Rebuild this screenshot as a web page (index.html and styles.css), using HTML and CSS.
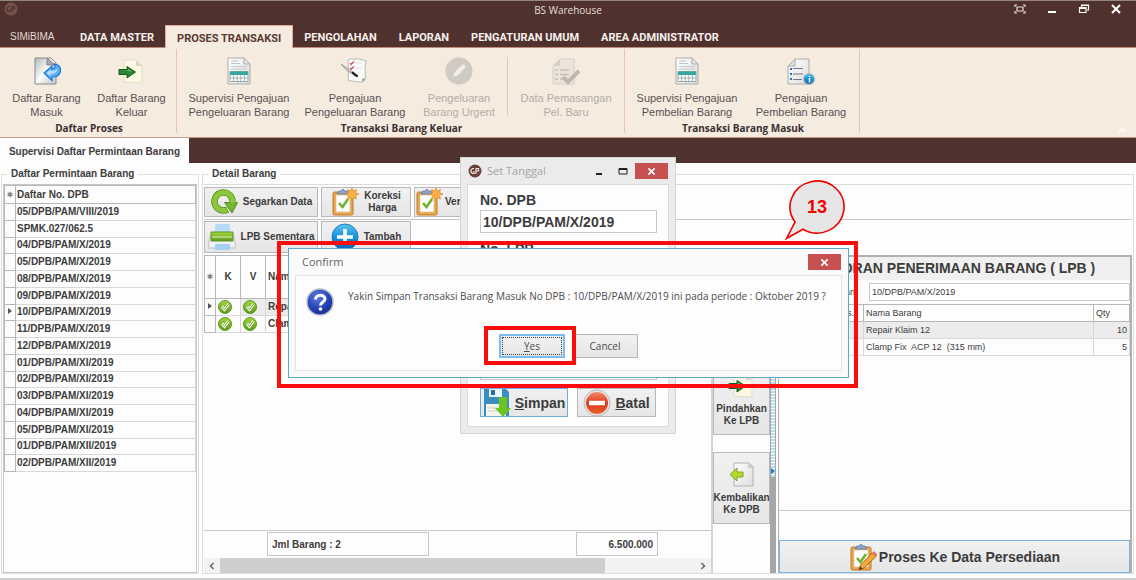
FILE: index.html
```html
<!DOCTYPE html>
<html lang="id">
<head>
<meta charset="utf-8">
<title>BS Warehouse</title>
<link rel="stylesheet" href="styles.css">
</head>
<body>
<svg class="defs" aria-hidden="true">
  <defs>
    <linearGradient id="gPaper" x1="0" y1="0" x2="1" y2="1"><stop offset="0" stop-color="#fff"/><stop offset="1" stop-color="#dcdedd"/></linearGradient>
    <linearGradient id="gSteel" x1="0" y1="0" x2="1" y2="1"><stop offset="0" stop-color="#b4b8bc"/><stop offset=".5" stop-color="#fafafa"/><stop offset="1" stop-color="#c4c8cc"/></linearGradient>
    <linearGradient id="gGreen" x1="0" y1="0" x2="0" y2="1"><stop offset="0" stop-color="#a6d43c"/><stop offset="1" stop-color="#5a9a1c"/></linearGradient>
    <linearGradient id="gBlue" x1="0" y1="0" x2="0" y2="1"><stop offset="0" stop-color="#5ec2f0"/><stop offset=".5" stop-color="#1593dc"/><stop offset="1" stop-color="#0a5fae"/></linearGradient>
    <linearGradient id="gRed" x1="0" y1="0" x2="0" y2="1"><stop offset="0" stop-color="#f58a6c"/><stop offset=".5" stop-color="#dd3a1c"/><stop offset="1" stop-color="#e8602e"/></linearGradient>
    <radialGradient id="gHelp" cx=".4" cy=".3" r=".8"><stop offset="0" stop-color="#5d7be0"/><stop offset=".6" stop-color="#2340b4"/><stop offset="1" stop-color="#16257c"/></radialGradient>
  </defs>
  <symbol id="sheet" viewBox="0 0 28 28">
    <path d="M3 1h16l6 6v20H3z" fill="url(#gPaper)" stroke="#a9adaa"/>
    <path d="M19 1v6h6z" fill="#e6e8e6" stroke="#a9adaa"/>
    <path d="M6 4h7M6 6.500h9M6 9.500h16M6 12h16" stroke="#c2c6c4" stroke-width="1.200"/>
    <path d="M5 14.500h18v10H5z" fill="#fff" stroke="#9aa"/>
    <path d="M5 21h18M8.600 15v9.500M12.200 15v9.500M15.800 15v9.500M19.400 15v9.500" stroke="#98a8a8" stroke-width=".9"/>
    <path d="M5 14.500h18v3.500H5z" fill="#38a5a0"/>
  </symbol>
  <symbol id="note" viewBox="0 0 28 28">
    <path d="M7 3l3-1.500 3 1 3-1 3 1 6 1-1 8 .5 10-3 4-14-2z" fill="#fafafa" stroke="#bbb"/>
    <path d="M21.500 25.500l-.5-4 3.500 0z" fill="#999"/>
    <path d="M9 6l1 1.500 3-3M9 11l1 1.500 3-3" stroke="#d0506a" fill="none" stroke-width="1.300"/>
    <path d="M15 6h6M15 11h6" stroke="#e2e2e2"/>
    <path d="M0 7l9 6.500 8 6-4-1-8-6z" fill="#ddd" stroke="#888" stroke-width=".8"/>
    <path d="M11 15l5.500 4.500" stroke="#111" stroke-width="2"/>
  </symbol>
  <symbol id="arrow-sheet" viewBox="0 0 28 28">
    <path d="M6 3h12l6 6v17l-18-1z" fill="#fbf8e4" stroke="#e2dfc8"/>
    <path d="M18 3v6h6z" fill="#d8d8d0"/>
    <path d="M1 12.500h8V9.500l8.500 5.500-8.500 6v-3.500H1z" fill="#2e8435" stroke="#175a20"/>
    <path d="M2 13.500h8v-2l4.500 3z" fill="#5cac5a"/>
  </symbol>
  <symbol id="clip" viewBox="0 0 28 28">
    <rect x="2" y="4" width="20" height="23" rx="1.500" fill="#e9a548" stroke="#c07a24"/>
    <path d="M5 7h14v17H5z" fill="#fff" stroke="#d9c8a8" stroke-width=".8"/>
    <path d="M6 6l2-3h2l2-2 2 2h2l2 3z" fill="#8fa3cf" stroke="#6479a8" stroke-width=".8"/>
    <path d="M8 15l3.500 4L17 11" fill="none" stroke="#6fb32c" stroke-width="2.600"/>
  </symbol>
  <symbol id="clip-star" viewBox="0 0 28 28">
    <use href="#clip" width="28" height="28"/>
    <path d="M21 0l1.500 3 3-1.500-1 3.500 3.500 1-3.500 1.500 1 3.500-3-1.500-1.500 3-1.500-3-3 1.500 1-3.500-3-1.500 3-1-1-3.500 3 1.500z" fill="#f8b04a" stroke="#e08a20" stroke-width=".7"/>
  </symbol>
  <symbol id="tick" viewBox="0 0 14 14">
    <circle cx="7" cy="7" r="6.500" fill="url(#gGreen)" stroke="#5d9625"/>
    <path d="M4 6.500l2.500 3L10.500 4" fill="none" stroke="#fff" stroke-width="2.800"/>
    <path d="M4 6.500l2.500 3L10.500 4" fill="none" stroke="#6aa82c" stroke-width="1"/>
  </symbol>
  <symbol id="cross" viewBox="0 0 10 10"><path d="M1.500 1.500l7 7M8.500 1.500l-7 7" stroke="currentColor" stroke-width="1.800"/></symbol>
  <symbol id="logo" viewBox="0 0 14 14">
    <circle cx="7" cy="7" r="6.500" fill="currentColor"/>
    <path d="M6 4.500H4.500L3 6v2l1.500 1.500H6V7M8 10V4.500h2.500V7H8" fill="none" stroke="var(--logo-ink)" stroke-width="1.200"/>
  </symbol>
</svg>

<header class="titlebar">
  <svg class="app-logo"><use href="#logo"/></svg>
  <h1 class="app-title">BS Warehouse</h1>
  <div class="win-buttons">
    <button class="win-btn" aria-label="Layar penuh"><svg viewBox="0 0 12 10"><path d="M1 3V1h2M9 1h2v2M1 7v2h2M9 9h2V7M3 3h6v4H3z" fill="none" stroke="#e8dcd8" stroke-width="1.200"/></svg></button>
    <button class="win-btn" aria-label="Kecilkan"><svg viewBox="0 0 12 10"><path d="M2 8h8" stroke="#fff" stroke-width="2"/></svg></button>
    <button class="win-btn" aria-label="Pulihkan"><svg viewBox="0 0 12 10"><path d="M3.500 3V1h7v5H9M1.500 3.500H8v5H1.500zM1.500 4.500H8M3.500 1.500h7" fill="none" stroke="#fff" stroke-width="1.200"/></svg></button>
    <button class="win-btn" aria-label="Tutup"><svg viewBox="0 0 12 10"><path d="M2 1l8 8M10 1L2 9" stroke="#fff" stroke-width="2"/></svg></button>
  </div>
</header>

<nav class="tabs">
  <button class="tab tab-app">SIMiBIMA</button>
  <button class="tab">DATA MASTER</button>
  <button class="tab tab-active">PROSES TRANSAKSI</button>
  <button class="tab">PENGOLAHAN</button>
  <button class="tab">LAPORAN</button>
  <button class="tab">PENGATURAN UMUM</button>
  <button class="tab">AREA ADMINISTRATOR</button>
</nav>

<section class="ribbon">
  <div class="group">
    <div class="group-items">
      <button class="tool tool-s"><svg class="tool-icon" viewBox="0 0 28 28"><path d="M2 1h16l5 5v21H2z" fill="url(#gSteel)" stroke="#888b90"/><path d="M14 1v7h8z" fill="#aaa" stroke="#808488"/><path d="M11 16l8-7v3c3-.500 4-3 2-5 4 0 7 3 6.500 7-.5 4-4 6-8.500 6v3.500z" fill="#5ab0f4" stroke="#1f78d8" stroke-width="1.200"/><path d="M13.500 16l4-3.500v1.500c4 0 6-1 7-3 0 4-3 6-7 6v2.500z" fill="#b6defc"/></svg><span>Daftar Barang<br>Masuk</span></button>
      <button class="tool tool-s"><svg class="tool-icon"><use href="#arrow-sheet"/></svg><span>Daftar Barang<br>Keluar</span></button>
    </div>
    <h2 class="group-name">Daftar Proses</h2>
  </div>
  <div class="group">
    <div class="group-items">
      <button class="tool tool-l"><svg class="tool-icon"><use href="#sheet"/></svg><span>Supervisi Pengajuan<br>Pengeluaran Barang</span></button>
      <button class="tool tool-l"><svg class="tool-icon"><use href="#note"/></svg><span>Pengajuan<br>Pengeluaran Barang</span></button>
      <button class="tool tool-m" disabled><svg class="tool-icon" viewBox="0 0 28 28"><circle cx="14" cy="14" r="13.500" fill="#cfcac2"/><path d="M8 20l1.500-4.500L18 7l3 3-8.500 8.500z" fill="#f3ede4"/></svg><span>Pengeluaran<br>Barang Urgent</span></button>
      <span class="group-split"></span>
      <button class="tool tool-w" disabled><svg class="tool-icon" viewBox="0 0 28 28"><path d="M8 2h14v25H1V9z" fill="#eae4da" stroke="#d6d0c6"/><path d="M8 2v7H1z" fill="#d6d0c6"/><path d="M3 13h3M3 17.500h3M3 22h3M8 13h9M8 17.500h9M8 22h6" stroke="#c4beb4" stroke-width="1.400"/><path d="M11 20l5 5 11-11" stroke="#bdb8ae" stroke-width="4" fill="none"/></svg><span>Data Pemasangan<br>Pel. Baru</span></button>
    </div>
    <h2 class="group-name">Transaksi Barang Keluar</h2>
  </div>
  <div class="group">
    <div class="group-items">
      <button class="tool tool-l"><svg class="tool-icon"><use href="#sheet"/></svg><span>Supervisi Pengajuan<br>Pembelian Barang</span></button>
      <button class="tool tool-w"><svg class="tool-icon" viewBox="0 0 28 28"><path d="M8 2h14v25H1V9z" fill="url(#gPaper)" stroke="#a9adaa"/><path d="M8 2v7H1z" fill="#e0e2e0" stroke="#a9adaa"/><path d="M6 11.500h10M6 17h10M6 22.500h9" stroke="#777" stroke-width="1.100"/><path d="M3 12h2M3 17h2M3 22h2" stroke="#2272e0" stroke-width="2"/><circle cx="22" cy="22" r="5.500" fill="url(#gBlue)" stroke="#b4bcc0" stroke-width="1.200"/><path d="M22.500 19v1M22.500 21v4.500" stroke="#fff" stroke-width="1.500"/></svg><span>Pengajuan<br>Pembelian Barang</span></button>
    </div>
    <h2 class="group-name">Transaksi Barang Masuk</h2>
  </div>
  <button class="ribbon-fold" aria-label="Ciutkan pita"><svg viewBox="0 0 8 5"><path d="M1 4l3-3 3 3" fill="none" stroke="#fff" stroke-width="1.500"/></svg></button>
</section>

<nav class="docbar"><button class="doc-tab">Supervisi Daftar Permintaan Barang</button></nav>

<main class="work">
  <fieldset class="box list-box">
    <legend>Daftar Permintaan Barang</legend>
    <div class="list-frame">
      <table class="grid list">
        <thead><tr><th class="mark">✱</th><th>Daftar No. DPB</th></tr></thead>
        <tbody>
          <tr><td class="mark"></td><td>05/DPB/PAM/VIII/2019</td></tr>
          <tr><td class="mark"></td><td>SPMK.027/062.5</td></tr>
          <tr><td class="mark"></td><td>04/DPB/PAM/X/2019</td></tr>
          <tr><td class="mark"></td><td>05/DPB/PAM/X/2019</td></tr>
          <tr><td class="mark"></td><td>08/DPB/PAM/X/2019</td></tr>
          <tr><td class="mark"></td><td>09/DPB/PAM/X/2019</td></tr>
          <tr><td class="mark"><i class="pointer"></i></td><td>10/DPB/PAM/X/2019</td></tr>
          <tr><td class="mark"></td><td>11/DPB/PAM/X/2019</td></tr>
          <tr><td class="mark"></td><td>12/DPB/PAM/X/2019</td></tr>
          <tr><td class="mark"></td><td>01/DPB/PAM/XI/2019</td></tr>
          <tr><td class="mark"></td><td>02/DPB/PAM/XI/2019</td></tr>
          <tr><td class="mark"></td><td>03/DPB/PAM/XI/2019</td></tr>
          <tr><td class="mark"></td><td>04/DPB/PAM/XI/2019</td></tr>
          <tr><td class="mark"></td><td>05/DPB/PAM/XI/2019</td></tr>
          <tr><td class="mark"></td><td>01/DPB/PAM/XII/2019</td></tr>
          <tr><td class="mark"></td><td>02/DPB/PAM/XII/2019</td></tr>
        </tbody>
      </table>
    </div>
  </fieldset>

  <fieldset class="box detail-box">
    <legend>Detail Barang</legend>
    <div class="toolbar toolbar-top">
      <button class="btn bar-wide"><svg class="btn-icon" viewBox="0 0 28 28"><path d="M17.500 21.500A9 9 0 1 1 22.500 13.500" fill="none" stroke="#4f8f1c" stroke-width="6.500"/><path d="M14.500 14.500h13L22 25z" fill="#76b62c" stroke="#4f8f1c"/><path d="M17 21.800A9 9 0 1 1 22.500 15" fill="none" stroke="#8cc63a" stroke-width="5"/></svg><span>Segarkan Data</span></button>
      <button class="btn bar-mid"><svg class="btn-icon"><use href="#clip-star"/></svg><span>Koreksi<br>Harga</span></button>
      <button class="btn bar-mid bar-start"><svg class="btn-icon"><use href="#clip-star"/></svg><span>Verifikasi</span></button>
    </div>
    <div class="toolbar">
      <button class="btn bar-wide"><svg class="btn-icon" viewBox="0 0 28 28"><path d="M7 1h15v10H7z" fill="#b8dcf8"/><path d="M2 13h24l2 12H0z" fill="#f0f2f2" stroke="#c0c4c4"/><path d="M3 9h22v9H3z" fill="url(#gGreen)" stroke="#5d9625"/><path d="M4 14h20" stroke="#e4f4c0"/><path d="M7 21h15v6H7z" fill="#a4d0f4"/></svg><span>LPB Sementara</span></button>
      <button class="btn bar-mid"><svg class="btn-icon" viewBox="0 0 28 28"><circle cx="14" cy="14" r="13" fill="url(#gBlue)" stroke="#1c7cc0"/><path d="M14 6v16M6 14h16" stroke="#fff" stroke-width="3.600"/></svg><span>Tambah</span></button>
    </div>

    <div class="panes">
      <section class="pane-items">
        <table class="grid items">
          <thead><tr><th class="mark">✱</th><th class="flag">K</th><th class="flag">V</th><th>Nama Barang</th></tr></thead>
          <tbody>
            <tr class="current"><td class="mark"><i class="pointer"></i></td><td class="flag"><svg class="tick"><use href="#tick"/></svg></td><td class="flag"><svg class="tick"><use href="#tick"/></svg></td><td>Repair Klaim 12</td></tr>
            <tr><td class="mark"></td><td class="flag"><svg class="tick"><use href="#tick"/></svg></td><td class="flag"><svg class="tick"><use href="#tick"/></svg></td><td>Clamp Fix ACP 12 (315 mm)</td></tr>
          </tbody>
        </table>
        <div class="totals"><output class="total total-count">Jml Barang : 2</output><output class="total total-sum">6.500.000</output></div>
        <div class="scroll">
          <button class="scroll-btn" aria-label="Kiri"><svg viewBox="0 0 8 8"><path d="M5.500 1l-3 3 3 3" fill="none" stroke="#666" stroke-width="1.500"/></svg></button>
          <div class="scroll-track"><div class="scroll-thumb"></div></div>
          <button class="scroll-btn" aria-label="Kanan"><svg viewBox="0 0 8 8"><path d="M2.500 1l3 3-3 3" fill="none" stroke="#666" stroke-width="1.500"/></svg></button>
        </div>
      </section>
      <div class="pane-moves">
        <button class="btn move"><svg class="btn-icon"><use href="#arrow-sheet"/></svg><span>Pindahkan<br>Ke LPB</span></button>
        <button class="btn move"><svg class="btn-icon" viewBox="0 0 28 28"><path d="M6 3h15l4 4v19H6z" fill="url(#gPaper)" stroke="#b0b0b0"/><path d="M20 3v5h5z" fill="#ccc"/><path d="M15 12H9V8l-7 6.500L9 21v-4h6z" fill="#b4d830" stroke="#7fa81c"/></svg><span>Kembalikan<br>Ke DPB</span></button>
      </div>
      <div class="splitter"><div class="splitter-grip"><i class="grip-arrow"></i></div></div>
      <section class="pane-lpb">
        <h2 class="lpb-title">LAPORAN PENERIMAAN BARANG ( LPB )</h2>
        <div class="lpb-field"><label for="req">No. Permintaan</label><input id="req" value="10/DPB/PAM/X/2019"></div>
        <table class="grid lpb">
          <thead><tr><th class="code">Kode Pers.</th><th>Nama Barang</th><th class="qty">Qty</th></tr></thead>
          <tbody>
            <tr class="current"><td></td><td>Repair Klaim 12</td><td class="qty num">10</td></tr>
            <tr><td></td><td>Clamp Fix&nbsp; ACP 12&nbsp; (315 mm)</td><td class="qty num">5</td></tr>
          </tbody>
        </table>
        <div class="lpb-foot"></div>
        <button class="btn process"><svg class="btn-icon" viewBox="0 0 28 28"><use href="#clip" width="28" height="28"/><path d="M10 27l1.500-5L23 10l4 3.500L15 25z" fill="#f4a83c" stroke="#b06a20"/><path d="M23 10l2-2 4 4-2 1.500z" fill="#e4787c"/><path d="M10 27l1-3.500 2.500 2z" fill="#333"/></svg><span>Proses Ke Data Persediaan</span></button>
      </section>
    </div>
  </fieldset>
</main>

<section class="window set-date">
  <header class="window-bar">
    <svg class="window-logo"><use href="#logo"/></svg>
    <h2 class="window-name">Set Tanggal</h2>
    <button class="bar-btn" aria-label="Kecilkan"><svg viewBox="0 0 10 8"><path d="M2 7h6" stroke="#222" stroke-width="2"/></svg></button>
    <button class="bar-btn" aria-label="Besarkan"><svg viewBox="0 0 10 8"><path d="M1 1.500h8v5.500h-8zM1 2.500h8" fill="none" stroke="#222"/></svg></button>
    <button class="close" aria-label="Tutup"><svg><use href="#cross"/></svg></button>
  </header>
  <form class="set-form">
    <label for="dpb">No. DPB</label><input id="dpb" value="10/DPB/PAM/X/2019">
    <label for="lpb">No. LPB</label><input id="lpb">
    <select class="period" aria-label="Periode"></select>
    <div class="set-actions">
      <button type="button" class="btn save"><svg class="btn-icon" viewBox="0 0 28 28"><path d="M1 0h22l3 3v24H1z" fill="#3a8fc0"/><path d="M6 0h13v8H6z" fill="#eaf4fa"/><path d="M8 1h4v5H8z" fill="#2a6f9c"/><path d="M3 15h20v12H3z" fill="#f4f4ec"/><path d="M5 19h12M5 22h12" stroke="#d4d0b8"/><path d="M16 8h8v11h4l-8 9-8-9h4z" fill="#6cc21e"/></svg><span><u>S</u>impan</span></button>
      <button type="button" class="btn cancel"><svg class="btn-icon" viewBox="0 0 28 28"><circle cx="14" cy="14" r="13" fill="#e8e8e8" stroke="#b8b8b8"/><circle cx="14" cy="14" r="11" fill="url(#gRed)"/><path d="M6 14h16" stroke="#fff" stroke-width="4.500"/></svg><span><u>B</u>atal</span></button>
    </div>
  </form>
</section>

<section class="window confirm" role="dialog" aria-labelledby="confirm-name">
  <header class="window-bar">
    <h2 class="window-name" id="confirm-name">Confirm</h2>
    <button class="close" aria-label="Tutup"><svg><use href="#cross"/></svg></button>
  </header>
  <div class="confirm-body">
    <div class="confirm-row">
      <svg class="help" viewBox="0 0 28 28"><circle cx="14" cy="14" r="13" fill="url(#gHelp)" stroke="#b4b8c4" stroke-width="1.500"/><path d="M9.500 11.500C9.500 6 19 6 19 11c0 3-4.500 3-4.500 6.500" fill="none" stroke="#fff" stroke-width="3"/><circle cx="14.500" cy="21" r="1.800" fill="#fff"/></svg>
      <p class="confirm-text">Yakin Simpan Transaksi Barang Masuk No DPB : 10/DPB/PAM/X/2019 ini pada periode : Oktober 2019 ?</p>
    </div>
    <div class="confirm-actions">
      <button class="btn yes"><span><u>Y</u>es</span></button>
      <button class="btn no">Cancel</button>
    </div>
  </div>
</section>

<div class="outline outline-dialog"></div>
<div class="outline outline-yes"></div>
<div class="callout">
  <svg viewBox="0 0 60 60"><path d="M10 42A27 26 0 1 1 18 49.200L1.500 58.500z" fill="#e6e6e6" stroke="#f00000" stroke-width="1.600"/></svg>
  <span>13</span>
</div>
</body>
</html>
```
FILE: styles.css
```css
* { box-sizing: border-box; }

body {
  --brown: #4f322e;
  --line: #c8c8c8;
  --logo-ink: #f0e4e0;
  position: relative;
  display: flex;
  flex-direction: column;
  min-height: 100vh;
  margin: 0;
  overflow: hidden;
  background: #fdfdfd;
  color: #3c3c3c;
  font: bold 10px/14px "Liberation Sans", sans-serif;
}

h1, h2, p { margin: 0; font-size: inherit; }
button, input, select { font: inherit; color: inherit; margin: 0; }
button { padding: 0; border: 0; background: none; }
svg { display: block; }
.defs { position: absolute; width: 0; height: 0; }

/* Title bar and ribbon tabs */
.titlebar {
  display: grid;
  grid-template-columns: 1fr auto 1fr;
  align-items: start;
  height: 25px;
  padding: 1px 4px 0;
  border-top: 1px solid #968682;
  background: var(--brown);
}
.app-logo { width: 14px; height: 14px; color: #75524a; --logo-ink: #4f322e; }
.app-title { color: #e8dedb; font: 10px/16px "Open Sans", sans-serif; }
.win-buttons { display: flex; justify-content: flex-end; }
.win-btn { display: grid; place-items: center; width: 32px; height: 14px; }
.win-btn svg { width: 12px; height: 10px; }

.tabs { display: flex; height: 23px; background: var(--brown); box-shadow: inset 0 -1px #c08a78; }
.tab { padding: 3px 11px 0; color: #f6efec; font: bold 11px/20px Roboto, sans-serif; white-space: nowrap; }
.tab-app { width: 69px; padding: 0 0 0 10px; color: #e6d8d2; font: 10px/20px "Liberation Sans", sans-serif; text-align: left; }
.tab-active { border: 1px solid #e2ab94; border-bottom: 0; background: #f5ebdf; color: #5a3a34; }

.ribbon { display: flex; height: 90px; border-bottom: 1px solid #c39c8c; background: #f5ebdf; }
.group { display: flex; flex-direction: column; margin: 1px 0 4px; padding: 8px 2px 0 4px; border-right: 1px solid #ecc4ae; }
.group-items { display: flex; height: 64px; }
.group-name { padding-top: 2px; color: #3a3030; font: bold 10px/14px "Open Sans", sans-serif; text-align: center; }
.group-split { width: 1px; height: 58px; margin: 0 2px; background: #ecc4ae; }
.tool { display: flex; flex-direction: column; align-items: center; gap: 6px; color: #5c5050; font: 11px/14px "Liberation Sans", sans-serif; white-space: nowrap; }
.tool:disabled { color: #b4aca6; }
.tool-icon { width: 28px; height: 28px; }
.tool-s { width: 85px; }
.tool-m { width: 92px; }
.tool-l { width: 116px; }
.tool-w { width: 112px; }
.ribbon-fold { align-self: flex-end; margin: 0 10px 4px auto; }
.ribbon-fold svg { width: 8px; height: 5px; }

.docbar { display: flex; height: 25px; background: var(--brown); }
.doc-tab { width: 189px; padding-top: 2px; background: #fdfdfd; }

/* Work area */
.work { display: flex; flex: 1; gap: 3px; padding: 4px 2px 4px 1px; border-bottom: 2px solid #cfcfcf; }
.box { display: flex; flex-direction: column; min-width: 0; margin: 0; padding: 3px 1px 0; border: 1px solid #dedede; }
.box legend { margin-left: 4px; padding: 0 4px; }
.list-box { width: 198px; }
.detail-box { flex: 1; }

.grid { width: 100%; border-spacing: 0; border-collapse: collapse; line-height: 12px; }
.grid th, .grid td { padding: 0 0 0 2px; border: 1px solid #d8d8d8; text-align: left; white-space: nowrap; }
.grid th { border-color: #b8b8b8; }
.grid .mark { width: 11px; padding: 0; border-color: #b8b8b8; color: #888; font-size: 7px; text-align: center; }
.pointer { display: inline-block; border: 3px solid transparent; border-left: 4px solid #555; border-right: 0; }

.list-frame { flex: 1; border: 1px solid var(--line); }
.list { height: 287px; }
.list th, .list td { padding-left: 1px; }
.list th { height: 18px; }

.toolbar { display: flex; gap: 3px; height: 35px; padding: 1px 0 2px; }
.toolbar-top { height: 36px; padding: 2px 0; border-top: 1px solid #dcdcdc; border-bottom: 1px solid var(--line); }
.btn {
  display: flex;
  align-items: center;
  justify-content: center;
  gap: 5px;
  border: 1px solid #b8b8b8;
  background: linear-gradient(#f1f1f1, #e6e6e6);
  line-height: 12px;
}
.btn-icon { flex: none; width: 28px; height: 28px; }
.bar-wide { width: 114px; }
.bar-mid { width: 90px; }
.bar-start { justify-content: flex-start; gap: 2px; }

.panes { display: flex; flex: 1; }
.pane-items { display: flex; flex: 1; flex-direction: column; min-width: 0; border-right: 2px solid #d4d4d4; }
.items thead th { height: 43px; }
.items td { height: 17px; }
.grid .flag { width: 25px; padding: 0; text-align: center; }
.tick { width: 14px; height: 14px; margin-left: 2px; }
.current td { background: #ececec; }
.items .current td:nth-child(-n+2) { background: none; }
.totals { display: flex; justify-content: space-between; margin-top: auto; padding: 1px 53px 2px 63px; border-top: 1px solid var(--line); }
.total { height: 24px; padding: 0 4px; border: 1px solid var(--line); line-height: 23px; }
.total-count { width: 162px; }
.total-sum { width: 82px; text-align: right; }
.scroll { display: flex; height: 15px; background: #f2f2f2; }
.scroll-btn { display: grid; place-items: center; width: 16px; }
.scroll-btn svg { width: 8px; height: 8px; }
.scroll-track { flex: 1; }
.scroll-thumb { width: 81%; height: 100%; background: #cecece; }

.pane-moves { display: flex; flex-direction: column; gap: 17px; width: 57px; padding-top: 108px; }
.move { flex-direction: column; gap: 4px; height: 72px; }

.splitter { display: flex; align-items: center; width: 6px; background: #a6a6a6; }
.splitter-grip { display: flex; align-items: flex-end; flex: 1; height: 126px; margin: 0 1px; padding-bottom: 3px; background: repeating-linear-gradient(#fff 0 1px, #b8dcf0 1px 3px); }
.grip-arrow { border: 3px solid transparent; border-left: 4px solid #1a80dc; border-right: 0; }

.pane-lpb { display: flex; flex-direction: column; width: 354px; margin-left: 2px; border: 1px solid #b0b0b0; border-width: 2px 2px 0 1px; font-weight: normal; font-size: 9px; }
.lpb-title { background: #f0f0f0; font: bold 14px/23px "Liberation Sans", sans-serif; text-align: center; white-space: nowrap; }
.lpb-field { display: flex; align-items: center; gap: 14px; padding: 3px 0 3px 12px; }
.lpb-field label { flex: none; width: 64px; text-align: right; }
.lpb-field input { flex: 1; min-width: 0; height: 18px; padding: 0 2px; border: 1px solid var(--line); background: #fff; }
.lpb th { font-weight: normal; }
.lpb th, .lpb td { height: 17px; }
.grid .code { width: 84px; padding-right: 9px; text-align: right; }
.grid .qty { width: 36px; }
.grid .num { padding-right: 2px; text-align: right; }
.lpb-foot { height: 30px; margin-top: auto; border-top: 1px solid var(--line); }
.process { height: 33px; border-color: #7db4e0; font: bold 14px/18px "Liberation Sans", sans-serif; gap: 2px; }

/* Floating windows */
.window { position: absolute; display: flex; flex-direction: column; }
.window-bar { display: flex; align-items: center; }
.window-name { flex: 1; font: 11px/16px "Open Sans", sans-serif; }
.close { display: grid; place-items: center; width: 33px; height: 16px; background: #c75050; color: #fff; }
.close svg { width: 9px; height: 9px; }

.set-date { left: 460px; top: 157px; width: 216px; padding: 0 6px 6px; border: 1px solid #d4d4d4; background: #ebebeb; }
.set-date .window-bar { height: 26px; padding: 0 1px; }
.window-logo { width: 14px; height: 14px; margin-right: 5px; color: #6b4038; }
.set-date .window-name { color: #a4a4a4; }
.bar-btn { width: 24px; }
.bar-btn svg { width: 10px; height: 8px; margin: auto; }
.set-form { display: flex; flex-direction: column; padding: 5px 11px 9px 12px; border: 1px solid #dcdcdc; background: #fdfdfd; font-size: 14px; line-height: 20px; }
.set-form input, .set-form select { width: 100%; height: 23px; margin-bottom: 6px; padding: 0 2px; border: 1px solid var(--line); border-radius: 0; background: #fff; }
.set-form .period { margin-top: 69px; }
.set-actions { display: flex; gap: 9px; padding-top: 2px; }
.set-actions .btn { height: 29px; gap: 4px; line-height: 18px; }
.save.btn { width: 88px; border-color: #6caede; }
.cancel.btn { width: 79px; }

.confirm { left: 288px; top: 248px; width: 561px; padding: 0 6px 6px; border: 1px solid #5fa8d2; background: #fafafa; }
.confirm .window-bar { height: 26px; padding: 0 1px 0 7px; }
.confirm .window-name { color: #666; }
.confirm-body { padding: 12px 10px; border: 1px solid #e4e4e4; background: #fdfdfd; color: #4c4c4c; font: 10px/14px "Open Sans", sans-serif; }
.confirm-row { display: flex; gap: 14px; }
.help { flex: none; width: 28px; height: 28px; }
.confirm-text { padding: 1px 0; white-space: nowrap; }
.confirm-actions { display: flex; justify-content: center; gap: 7px; padding: 18px 0 0; }
.confirm-actions .btn { width: 66px; height: 24px; }
.yes.btn { padding: 1px; border: 2px solid #7cbcf0; }
.yes span { flex: 1; align-self: stretch; border: 1px dotted #444; line-height: 16px; }

/* Annotations */
.outline { position: absolute; border: 4px solid #fb0d0d; pointer-events: none; }
.outline-dialog { left: 277px; top: 241px; width: 581px; height: 147px; }
.outline-yes { left: 484px; top: 326px; width: 92px; height: 39px; }
.callout { position: absolute; left: 785px; top: 180px; width: 60px; height: 60px; }
.callout svg { width: 100%; height: 100%; }
.callout span { position: absolute; inset: 0 0 6px 4px; display: grid; place-items: center; color: #f00000; font-size: 18px; line-height: 20px; }
```
